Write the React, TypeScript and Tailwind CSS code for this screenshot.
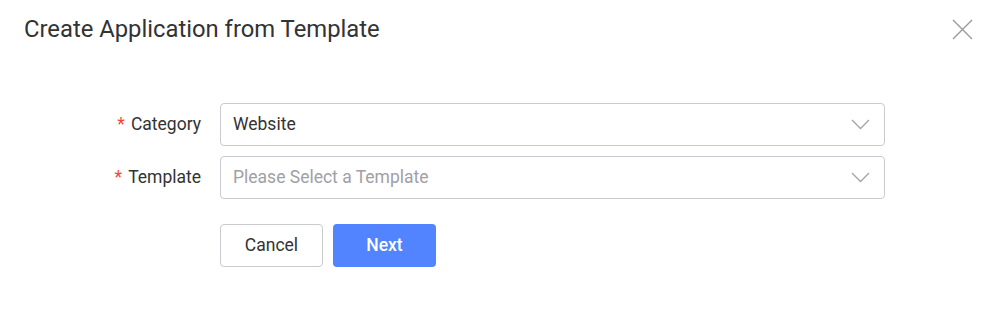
const font = { fontFamily: "Roboto, 'Noto Sans', sans-serif" };

function Chevron() {
  return (
    <svg width="19" height="11" viewBox="0 0 19 11" fill="none" className="text-[#a3a3a3]">
      <path d="M1 1l8.5 8.5L18 1" stroke="currentColor" strokeWidth="1.3" />
    </svg>
  );
}

function Field({ label, value, placeholder }: { label: string; value?: string; placeholder: string }) {
  return (
    <div className="flex items-center">
      <label className="w-[120px] shrink-0 pr-[19px] text-right text-[17.5px] text-[#333]">
        <span className="mr-[6px] text-[#f5472d]">*</span>
        {label}
      </label>
      <div className="flex h-[43px] w-[665px] items-center justify-between rounded-[4px] border border-[#c9cbd1] pl-3 pr-[14px]">
        <span className={value ? "text-[17.5px] text-[#333]" : "text-[17.5px] text-[#a0a0a6]"}>
          {value ?? placeholder}
        </span>
        <Chevron />
      </div>
    </div>
  );
}

export default function App() {
  return (
    <div className="h-[331px] w-[989px] bg-white" style={font}>
      <div className="flex items-start justify-between pl-6 pr-[16px] pt-[13px]">
        <h2 className="text-[23.8px] leading-[32px] text-[#333]">Create Application from Template</h2>
        <svg width="21" height="21" viewBox="0 0 21 21" className="mt-[6px] text-[#9a9a9a]">
          <path d="M1 1l19 19M20 1L1 20" stroke="currentColor" strokeWidth="1.4" />
        </svg>
      </div>
      <div className="ml-[100px] mt-[58px] flex flex-col gap-[10px]">
        <Field label="Category" value="Website" placeholder="Please Select" />
        <Field label="Template" placeholder="Please Select a Template" />
        <div className="ml-[120px] mt-[15px] flex gap-[10px]">
          <button className="h-[43px] w-[103px] rounded-[4px] border border-[#c9cbd1] bg-white text-[17.5px] text-[#333]">
            Cancel
          </button>
          <button className="h-[43px] w-[103px] rounded-[4px] bg-[#5284ff] text-[17.5px] font-medium text-white">
            Next
          </button>
        </div>
      </div>
    </div>
  );
}
